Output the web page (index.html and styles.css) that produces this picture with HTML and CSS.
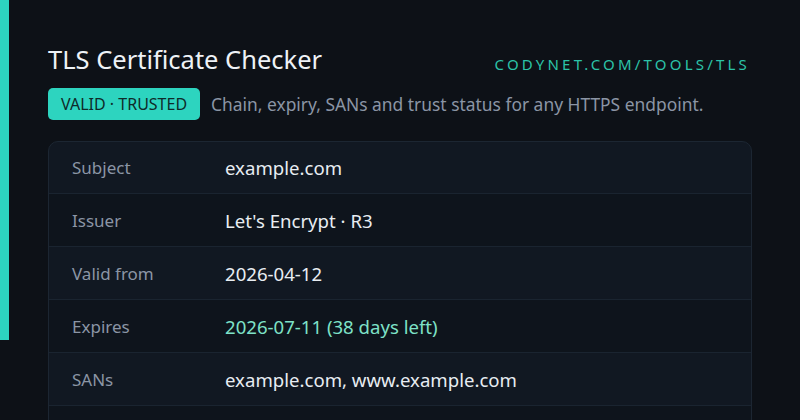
FILE: index.html
```html
<!DOCTYPE html>
<html>
<head>
    <title>TLS Certificate Checker</title>
    <link rel="stylesheet" href="styles.css">
</head>
<body>
    <div class="page">
        <div class="accent"></div>
        <div class="main">
            <div class="header">
                <h1>TLS Certificate Checker</h1>
                <span class="site">codynet.com/tools/tls</span>
            </div>
            <div class="sub">
                <span class="badge">VALID · TRUSTED</span>
                <span class="desc">Chain, expiry, SANs and trust status for any HTTPS endpoint.</span>
            </div>

            <div class="card">
                <div class="row">
                    <div class="label">Subject</div>
                    <div class="value">example.com</div>
                </div>
                <div class="row">
                    <div class="label">Issuer</div>
                    <div class="value">Let's Encrypt · R3</div>
                </div>
                <div class="row">
                    <div class="label">Valid from</div>
                    <div class="value">2026-04-12</div>
                </div>
                <div class="row">
                    <div class="label">Expires</div>
                    <div class="value ok">2026-07-11 (38 days left)</div>
                </div>
                <div class="row">
                    <div class="label">SANs</div>
                    <div class="value">example.com, www.example.com</div>
                </div>
                <div class="row"></div>
            </div>
        </div>
    </div>
</body>
</html>
```

FILE: styles.css
```css
html, body {
    margin: 0;
    height: 100%;
    overflow: hidden;
}
body {
    background: #0d1117;
    font-family: "Noto Sans", "Open Sans", sans-serif;
    color: #e6edf3;
}

.page { display: flex; align-items: flex-start; }
.accent {
    width: 9px;
    height: 340px;
    background: #2dd4bf;
    flex-shrink: 0;
}
.main {
    width: 704px;
    padding: 40px 0 0 39px;
}

.header {
    display: flex;
    justify-content: space-between;
    align-items: baseline;
}
h1 {
    margin: 0;
    font-size: 25.5px;
    font-weight: 400;
    line-height: 38px;
    color: #eef2f6;
}
.site {
    text-transform: uppercase;
    font-size: 15px;
    letter-spacing: 3.2px;
    color: #2cc3a8;
    margin-right: 2px;
    position: relative;
    top: 1px;
}

.sub {
    display: flex;
    align-items: center;
    gap: 11px;
    margin-top: 10px;
}
.badge {
    background: #2dd4bf;
    color: #0f2b2a;
    font-size: 16px;
    line-height: 32px;
    padding: 0 13px;
    border-radius: 5px;
}
.desc {
    font-size: 17.4px;
    color: #8b95a5;
}

.card {
    margin-top: 21px;
    border: 1px solid #1c2632;
    border-radius: 10px;
    overflow: hidden;
    background: #111822;
}
.row {
    display: flex;
    align-items: center;
    height: 52px;
    border-top: 1px solid #1a2430;
    padding-left: 23px;
}
.row:first-child { border-top: none; height: 51px; }
.row:nth-child(even) { background: #0e141c; }
.label {
    width: 153px;
    font-size: 17px;
    color: #8b95a5;
}
.value {
    font-size: 18.6px;
    color: #e8edf2;
}
.value.ok { color: #7ee2c8; }
```
